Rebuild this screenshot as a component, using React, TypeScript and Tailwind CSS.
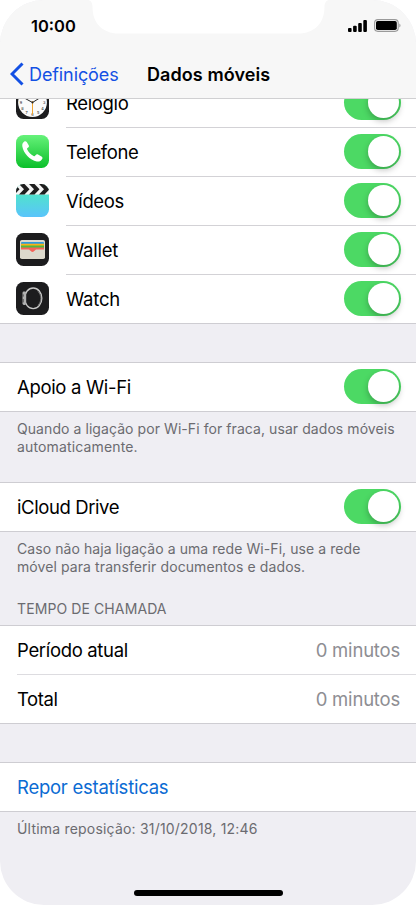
import type { ReactNode } from "react";
import clsx from "clsx";

function Toggle() {
  return (
    <span className="mr-[-0.5px] flex h-[35px] w-[57px] shrink-0 items-center justify-end rounded-full bg-[#4cd964] pr-[2px]">
      <span className="size-[31px] rounded-full bg-white shadow-[0_3px_6px_rgba(0,0,0,0.25)]" />
    </span>
  );
}

function ClockIcon() {
  const digits = Array.from({ length: 12 }, (_, i) => {
    const a = ((i + 1) * Math.PI) / 6;
    return { n: i + 1, x: 16.5 + Math.sin(a) * 11.6, y: 16.5 - Math.cos(a) * 11.6 };
  });
  return (
    <svg viewBox="0 0 33 33" className="size-[33px]">
      <rect width="33" height="33" rx="7.5" fill="#1c1c1e" />
      <circle cx="16.5" cy="16.5" r="14.4" fill="#fafafa" />
      {digits.map((d) => (
        <text
          key={d.n}
          x={d.x}
          y={d.y + 1.4}
          fontSize="3.8"
          fontWeight="500"
          textAnchor="middle"
          fill="#333"
        >
          {d.n}
        </text>
      ))}
      <path d="M16.5 16.5 8 11.8M16.5 16.5 23 12.4" stroke="#222" strokeWidth="1" strokeLinecap="round" />
      <path d="M16.5 15v13.500" stroke="#f0a330" strokeWidth="1" />
      <circle cx="16.5" cy="16.5" r="1" fill="#222" />
    </svg>
  );
}

function PhoneIcon() {
  return (
    <svg viewBox="0 0 33 33" className="size-[33px]">
      <defs>
        <linearGradient id="phone" x1="0" y1="0" x2="0" y2="1">
          <stop offset="0" stopColor="#66f27a" />
          <stop offset="1" stopColor="#0bbf2a" />
        </linearGradient>
      </defs>
      <rect width="33" height="33" rx="7.5" fill="url(#phone)" />
      <path
        d="M8.300 6.500c1-.7 1.900-.3 2.600.7l1.800 3c.5.9.3 1.700-.5 2.300l-.8.600c-.5.400-.5.900-.2 1.500 1.400 2.700 3.600 4.900 6.400 6.400.6.300 1.100.300 1.500-.2l.6-.8c.6-.8 1.400-1 2.300-.5l3.500 1.900c.9.600 1.300 1.400.8 2.300-1.200 2.200-3.200 3.200-5.500 2.800C14 25.200 7.300 18.300 6.300 11.300c-.3-2 .4-3.700 2-4.800z"
        fill="#fff"
      />
    </svg>
  );
}

function VideosIcon() {
  return (
    <svg viewBox="0 0 33 33" className="size-[33px]">
      <defs>
        <linearGradient id="videos" x1="0" y1="0" x2="0" y2="1">
          <stop offset="0.25" stopColor="#4fe5c9" />
          <stop offset="1" stopColor="#5ac4fb" />
        </linearGradient>
        <clipPath id="videos-clip">
          <rect width="33" height="33" rx="7.5" />
        </clipPath>
      </defs>
      <g clipPath="url(#videos-clip)">
        <rect width="33" height="33" fill="url(#videos)" />
        <rect width="33" height="10.500" fill="#f4f4f4" />
        <path
          d="M-7 0h5.500l5 5.200h-5.500zM3 0h5.500l5 5.200H8zM13 0h5.500l5 5.200H18zM23 0h5.500l5 5.200H28zM-2 5.200h5.500l-5 5.300h-5.500zM8 5.200h5.500l-5 5.300H3zM18 5.200h5.500l-5 5.300H13zM28 5.200h5.500l-5 5.300H23z"
          fill="#1d1d1d"
        />
      </g>
    </svg>
  );
}

function WalletIcon() {
  return (
    <svg viewBox="0 0 33 33" className="size-[33px]">
      <rect width="33" height="33" rx="7.5" fill="#1c1c1e" />
      <rect x="4" y="7" width="25" height="19" rx="1.800" fill="#dcd9cd" />
      <path d="M5 11V10Q5 9 6 9h21q1 0 1 1v1H5z" fill="#2f9bdc" />
      <path d="M5 10.700h23V13H5z" fill="#fbb117" />
      <path d="M5 12.600h23V15H5z" fill="#50b93f" />
      <path d="M5 14.400h23v2.100h-7.300c-1 0-1.300.4-1.900 1.100-1.300 1.700-3.300 1.700-4.600 0-.6-.7-.9-1.100-1.900-1.100H5z" fill="#f4645a" />
    </svg>
  );
}

function WatchIcon() {
  return (
    <svg viewBox="0 0 33 33" className="size-[33px]">
      <rect width="33" height="33" rx="7.5" fill="#1c1c1e" />
      <ellipse cx="17.2" cy="16.300" rx="8.600" ry="10.300" fill="none" stroke="#c6c6c6" strokeWidth="1.400" />
      <path d="M22 9.500c3.800 3.800 3.800 10 0 13.800" fill="none" stroke="#777" strokeWidth="0.900" />
      <rect x="6.500" y="9.600" width="3.700" height="13.400" rx="1.400" fill="#b0b0b0" />
      <path d="M7.200 12.400v2.200M7.200 17v3.400" stroke="#3a3a3a" strokeWidth="0.800" />
    </svg>
  );
}

const APPS = [
  { name: "Relógio", icon: <ClockIcon />, spacing: "tracking-[-0.35px]" },
  { name: "Telefone", icon: <PhoneIcon />, spacing: "tracking-[-0.42px]" },
  { name: "Vídeos", icon: <VideosIcon />, spacing: "tracking-[-0.4px]" },
  { name: "Wallet", icon: <WalletIcon />, spacing: "tracking-[-0.25px]" },
  { name: "Watch", icon: <WatchIcon />, spacing: "tracking-[-0.2px]" },
];

function Group({ children, className }: { children: ReactNode; className?: string }) {
  return (
    <section className={clsx("shrink-0 border-y border-[#cecdd2] bg-white", className)}>
      {children}
    </section>
  );
}

function Row({ children }: { children: ReactNode }) {
  return <div className="flex h-12 items-center justify-between pr-4 pb-px pl-[17px]">{children}</div>;
}

function Note({ children, className }: { children: ReactNode; className?: string }) {
  return (
    <p
      className={clsx(
        "shrink-0 pt-[8px] pl-[17px] text-[14px] leading-[18px] whitespace-nowrap text-[#6b6b70]",
        className,
      )}
    >
      {children}
    </p>
  );
}

function StatusBar() {
  return (
    <div className="flex h-[50px] items-center justify-between pr-[15px] pl-[31px]">
      <span className="pt-[2px] text-[16.5px] font-semibold">10:00</span>
      <div className="flex items-center gap-[7px] pt-[1px]">
        <svg viewBox="0 0 19 12" className="h-3 w-[19px]">
          <rect x="0" y="8" width="3.600" height="4" rx="1" />
          <rect x="5.100" y="5.700" width="3.600" height="6.300" rx="1" />
          <rect x="10.200" y="3" width="3.600" height="9" rx="1" />
          <rect x="15.300" y="0" width="3.600" height="12" rx="1" />
        </svg>
        <svg viewBox="0 0 27 13" className="h-[13px] w-[27px]">
          <rect x="0.600" y="0.600" width="23.600" height="11.800" rx="3.300" fill="none" stroke="#9a9a9a" strokeWidth="1.100" />
          <rect x="2" y="2" width="20.800" height="9" rx="1.800" />
          <path d="M25.300 4.500c1.600.5 1.600 3.500 0 4z" fill="#9a9a9a" />
        </svg>
      </div>
    </div>
  );
}

export default function App() {
  return (
    <main className="relative h-[905px] w-[417px] overflow-hidden bg-white font-['Inter',sans-serif] text-[18.5px] text-black">
      <div className="flex h-[905px] w-[416px] flex-col overflow-hidden rounded-[44px] bg-[#efeef3]">
        <header className="h-[99px] shrink-0 border-b border-[#d0d0d2] bg-[#f7f7f7]">
          <StatusBar />
          <div className="flex h-12 items-center">
            <a className="flex w-[147px] items-center gap-[5px] pl-[10px] text-[#1350e4]">
              <svg viewBox="0 0 14 24" className="h-6 w-[14px] shrink-0">
                <path d="M12.500 1.500 2 12l10.500 10.500" fill="none" stroke="currentColor" strokeWidth="3" />
              </svg>
              <span className="text-[18px] tracking-[-0.1px]">Definições</span>
            </a>
            <h1 className="text-[18px] font-semibold tracking-[0.08px] whitespace-nowrap">Dados móveis</h1>
          </div>
        </header>

        {/* App list, scrolled partly under the navigation bar */}
        <section className="flex h-[225px] shrink-0 flex-col justify-end overflow-hidden border-b border-[#cecdd2] bg-white">
          {APPS.map((app, i) => (
            <div key={app.name} className="flex shrink-0 items-center pl-4">
              <span className="pb-[2px]">{app.icon}</span>
              <div
                className={clsx(
                  "ml-[17px] flex flex-1 items-center justify-between pr-4 pb-px",
                  i < APPS.length - 1 ? "h-[49px] border-b border-[#d3d2d6]" : "h-12",
                )}
              >
                <span className={clsx("pt-[3px]", app.spacing)}>{app.name}</span>
                <Toggle />
              </div>
            </div>
          ))}
        </section>

        <Group className="mt-[38px]">
          <Row>
            <span className="pt-[3px] tracking-[-0.33px]">Apoio a Wi-Fi</span>
            <Toggle />
          </Row>
        </Group>
        <Note className="h-[70px]">
          <span className="tracking-[0.07px]">Quando a ligação por Wi-Fi for fraca, usar dados móveis</span>
          <br />
          <span className="tracking-[0.15px]">automaticamente.</span>
        </Note>

        <Group>
          <Row>
            <span className="pt-[3px] tracking-[-0.4px]">iCloud Drive</span>
            <Toggle />
          </Row>
        </Group>
        <Note className="h-[68px]">
          <span className="tracking-[0.07px]">Caso não haja ligação a uma rede Wi-Fi, use a rede</span>
          <br />
          <span className="tracking-[0.09px]">móvel para transferir documentos e dados.</span>
        </Note>

        <h2 className="h-[25px] shrink-0 pl-[17px] text-[14px] leading-[18px] tracking-[0.1px] text-[#6b6b70]">
          TEMPO DE CHAMADA
        </h2>
        <Group>
          <Row>
            <span className="pt-[3px] tracking-[-0.33px]">Período atual</span>
            <span className="pt-[3px] tracking-[-0.2px] text-[#8e8e93]">0 minutos</span>
          </Row>
          <div className="ml-[17px] h-px bg-[#dddce0]" />
          <Row>
            <span className="pt-[3px] tracking-[-0.4px]">Total</span>
            <span className="pt-[3px] tracking-[-0.2px] text-[#8e8e93]">0 minutos</span>
          </Row>
        </Group>

        <Group className="mt-[38px]">
          <Row>
            <button className="pt-[3px] tracking-[-0.25px] text-[#0b6bd3]">Repor estatísticas</button>
          </Row>
        </Group>
        <Note>
          <span className="tracking-[0.2px]">Última reposição: 31/10/2018, 12:46</span>
        </Note>
        <div className="mx-auto mt-auto mb-[9px] h-[6px] w-[149px] shrink-0 rounded-full bg-black" />
      </div>

      {/* Notch */}
      <svg viewBox="0 0 240 34" className="absolute top-0 left-[88px] h-[34px] w-[241px]" preserveAspectRatio="none">
        <path d="M0 0C3 .4 4.500 3 4.500 7c0 16 10 26.500 26 26.500h179c16 0 26-10.500 26-26.500 0-4 1.500-6.600 4.500-7z" fill="#fff" />
      </svg>
    </main>
  );
}
